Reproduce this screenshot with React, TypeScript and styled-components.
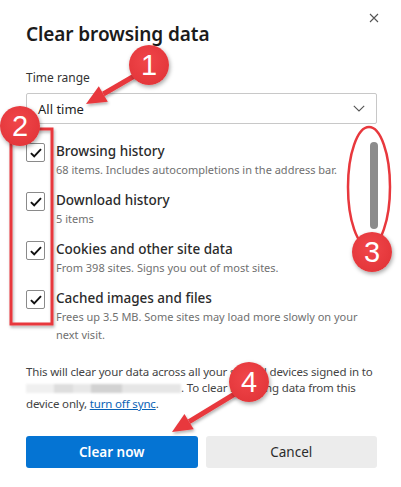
import React from "react";
import styled, { createGlobalStyle } from "styled-components";

const GlobalStyle = createGlobalStyle`
  html, body {
    margin: 0;
    padding: 0;
    background: #ffffff;
  }
  body {
    font-family: "Noto Sans", "Open Sans", sans-serif;
    color: #1f1f1f;
  }
`;

const RED = "#e8383d";

const Page = styled.div`
  position: relative;
  width: 401px;
  height: 487px;
  overflow: hidden;
  background: #fff;
`;

const Dialog = styled.div`
  display: flex;
  flex-direction: column;
  padding: 20px 24px 0 26px;
`;

const Header = styled.div`
  display: flex;
  justify-content: space-between;
  align-items: flex-start;
`;

const Title = styled.h1`
  margin: 0;
  font-size: 19px;
  line-height: 28px;
  font-weight: 600;
  color: #1b1b1b;
  letter-spacing: -0.1px;
`;

const CloseButton = styled.button`
  border: none;
  background: none;
  padding: 0;
  margin: -8px -3px 0 0;
  width: 12px;
  height: 12px;
  display: flex;
  align-items: center;
  justify-content: center;
`;

const FieldLabel = styled.div`
  margin-top: 22px;
  font-size: 12px;
  line-height: 16px;
  color: #333;
`;

const Select = styled.div`
  margin-top: 7px;
  height: 31px;
  box-sizing: border-box;
  border: 1px solid #c8c8c8;
  border-radius: 2px;
  display: flex;
  align-items: center;
  justify-content: space-between;
  padding: 0 11px 0 11px;
  font-size: 13px;
  color: #1f1f1f;
`;

const ScrollArea = styled.div`
  display: flex;
  gap: 3px;
  margin-top: 17px;
  height: 200px;
`;

const OptionList = styled.div`
  flex: 1;
  display: flex;
  flex-direction: column;
  gap: 11px;
`;

const ScrollTrack = styled.div`
  width: 8px;
  margin-right: -1px;
  padding-top: 1px;
`;

const ScrollThumb = styled.div`
  width: 8px;
  height: 87px;
  border-radius: 4px;
  background: #8c8c8c;
`;

const Option = styled.div`
  display: flex;
  align-items: flex-start;
  gap: 11px;
`;

const Box = styled.div`
  flex: none;
  width: 17px;
  height: 17px;
  margin-top: 2px;
  border: 1px solid #8a8a8a;
  border-radius: 2px;
  display: flex;
  align-items: center;
  justify-content: center;
  background: #fff;
`;

const OptionText = styled.div`
  display: flex;
  flex-direction: column;
`;

const OptionTitle = styled.div`
  font-size: 13.5px;
  line-height: 20px;
  font-weight: 500;
  color: #2b2b2b;
`;

const OptionHint = styled.div`
  font-size: 11px;
  line-height: 18px;
  color: #707070;
`;

const Notice = styled.p`
  margin: 23px 0 0;
  font-size: 11.5px;
  line-height: 16px;
  letter-spacing: -0.15px;
  color: #444;
`;

const Redacted = styled.span`
  display: inline-block;
  width: 155px;
  height: 9px;
  vertical-align: -1px;
  background: linear-gradient(
    90deg,
    #f0f0f0 0 18%,
    #dedede 18% 30%,
    #e8e8e8 30% 42%,
    #d2d2d2 42% 62%,
    #e6e6e6 62% 100%
  );
  filter: blur(0.8px);
`;

const Link = styled.a`
  color: #0a62b5;
  text-decoration: underline;
`;

const Actions = styled.div`
  display: flex;
  gap: 8px;
  margin-top: 24px;
`;

const Button = styled.button<{ $primary?: boolean }>`
  flex: 1;
  height: 32px;
  border: none;
  border-radius: 3px;
  font-family: inherit;
  font-size: 13.5px;
  font-weight: ${(p) => (p.$primary ? 600 : 400)};
  background: ${(p) => (p.$primary ? "#0574d3" : "#ececec")};
  color: ${(p) => (p.$primary ? "#fff" : "#2b2b2b")};
`;

/* numbered callout markers */
const Badge = styled.div<{ $x: number; $y: number }>`
  position: absolute;
  left: ${(p) => p.$x - 20}px;
  top: ${(p) => p.$y - 20}px;
  width: 40px;
  height: 40px;
  border-radius: 50%;
  background: radial-gradient(circle at 45% 40%, #f0464a 0%, #e4373b 70%, #d63135 100%);
  box-shadow: 1px 2px 4px rgba(0, 0, 0, 0.35);
  color: #fff;
  font-family: "Liberation Sans", Arial, sans-serif;
  font-size: 29px;
  line-height: 40px;
  text-align: center;
`;

const Markup = styled.svg`
  position: absolute;
  left: 0;
  top: 0;
  pointer-events: none;
`;

const Check = () => (
  <svg width="12" height="10" viewBox="0 0 12 10">
    <path d="M0.9 5.1 L4.2 8.3 L11 1.2" fill="none" stroke="#111" strokeWidth="1.9" />
  </svg>
);

const options = [
  { title: "Browsing history", hint: "68 items. Includes autocompletions in the address bar." },
  { title: "Download history", hint: "5 items" },
  { title: "Cookies and other site data", hint: "From 398 sites. Signs you out of most sites." },
  {
    title: "Cached images and files",
    hint: "Frees up 3.5 MB. Some sites may load more slowly on your next visit.",
  },
];

const Arrow = ({ x1, y1, x2, y2 }: { x1: number; y1: number; x2: number; y2: number }) => {
  const a = Math.atan2(y2 - y1, x2 - x1);
  const len = 20;
  const half = 9;
  const bx = x2 - Math.cos(a) * len;
  const by = y2 - Math.sin(a) * len;
  const px = -Math.sin(a) * half;
  const py = Math.cos(a) * half;
  return (
    <g filter="url(#shadow)">
      <line x1={x1} y1={y1} x2={bx} y2={by} stroke={RED} strokeWidth="5" />
      <polygon points={`${x2},${y2} ${bx + px},${by + py} ${bx - px},${by - py}`} fill={RED} />
    </g>
  );
};

export default function App() {
  return (
    <Page>
      <GlobalStyle />
      <Dialog>
        <Header>
          <Title>Clear browsing data</Title>
          <CloseButton aria-label="Close">
            <svg width="10" height="10" viewBox="0 0 10 10">
              <path d="M1 1 L9 9 M9 1 L1 9" stroke="#555" strokeWidth="1.1" />
            </svg>
          </CloseButton>
        </Header>

        <FieldLabel>Time range</FieldLabel>
        <Select>
          <span>All time</span>
          <svg width="12" height="7" viewBox="0 0 12 7">
            <path d="M0.8 0.8 L6 6 L11.2 0.8" fill="none" stroke="#555" strokeWidth="1.1" />
          </svg>
        </Select>

        <ScrollArea>
          <OptionList>
            {options.map((o) => (
              <Option key={o.title}>
                <Box>
                  <Check />
                </Box>
                <OptionText>
                  <OptionTitle>{o.title}</OptionTitle>
                  <OptionHint>{o.hint}</OptionHint>
                </OptionText>
              </Option>
            ))}
          </OptionList>
          <ScrollTrack>
            <ScrollThumb />
          </ScrollTrack>
        </ScrollArea>

        <Notice>
          This will clear your data across all your synced devices signed in to <Redacted />. To
          clear browsing data from this device only, <Link>turn off sync</Link>.
        </Notice>

        <Actions>
          <Button $primary>Clear now</Button>
          <Button>Cancel</Button>
        </Actions>
      </Dialog>

      <Markup width="401" height="487" viewBox="0 0 401 487">
        <defs>
          <filter id="shadow" x="-20%" y="-20%" width="140%" height="140%">
            <feDropShadow dx="1" dy="2" stdDeviation="1.5" floodColor="#000" floodOpacity="0.3" />
          </filter>
        </defs>
        <rect x="11" y="129" width="41" height="195" fill="none" stroke={RED} strokeWidth="3" filter="url(#shadow)" />
        <ellipse cx="369" cy="187" rx="21" ry="60" fill="none" stroke={RED} strokeWidth="2.5" />
        <Arrow x1={136} y1={75} x2={86} y2={104} />
        <Arrow x1={238} y1={392} x2={172} y2={432} />
      </Markup>

      <Badge $x={149} $y={65}>1</Badge>
      <Badge $x={20} $y={126}>2</Badge>
      <Badge $x={372} $y={252}>3</Badge>
      <Badge $x={249} $y={382}>4</Badge>
    </Page>
  );
}
